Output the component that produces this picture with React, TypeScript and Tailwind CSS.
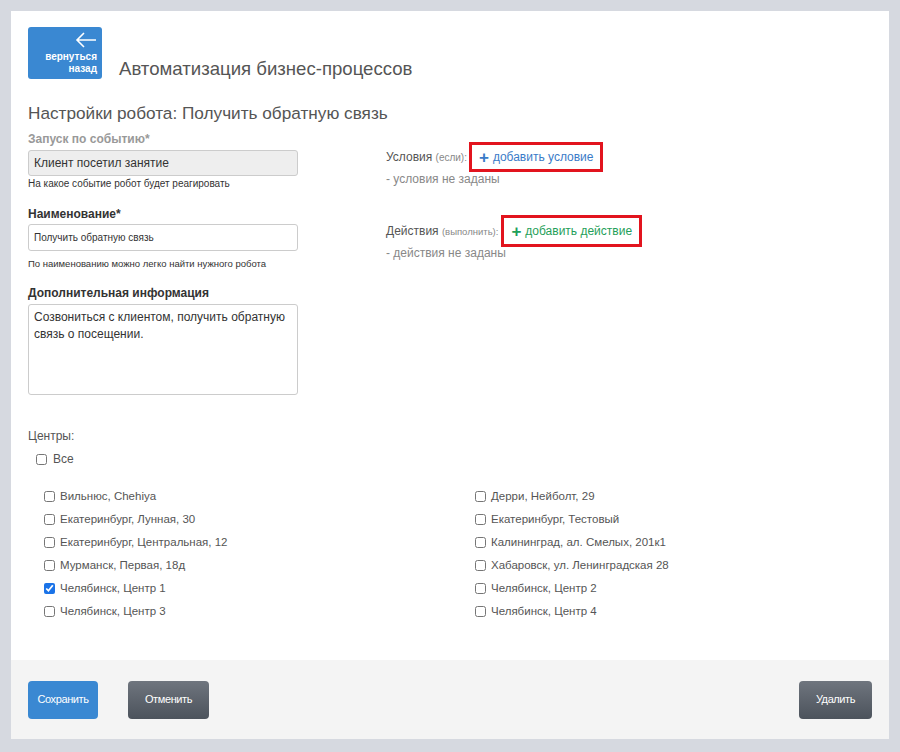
import { useState } from "react";

const leftCenters = [
  "Вильнюс, Chehiya",
  "Екатеринбург, Лунная, 30",
  "Екатеринбург, Центральная, 12",
  "Мурманск, Первая, 18д",
  "Челябинск, Центр 1",
  "Челябинск, Центр 3",
];

const rightCenters = [
  "Дерри, Нейболт, 29",
  "Екатеринбург, Тестовый",
  "Калининград, ал. Смелых, 201к1",
  "Хабаровск, ул. Ленинградская 28",
  "Челябинск, Центр 2",
  "Челябинск, Центр 4",
];

function CenterBox({ label, checked, onToggle }: { label: string; checked: boolean; onToggle: () => void }) {
  return (
    <label className="flex h-[23px] items-center gap-[5px] text-[11.5px] text-[#555]">
      <input type="checkbox" checked={checked} onChange={onToggle} className="m-0 h-[11px] w-[11px] accent-[#1a73e8]" />
      <span>{label}</span>
    </label>
  );
}

export default function App() {
  const [checked, setChecked] = useState<Record<string, boolean>>({ "Челябинск, Центр 1": true });
  const [all, setAll] = useState(false);

  const toggle = (name: string) => setChecked((prev) => ({ ...prev, [name]: !prev[name] }));

  return (
    <div className="min-h-[752px] bg-[#d6d9e0] p-[11px] font-['Liberation_Sans',Arial,sans-serif] text-[#333]">
      <div className="flex min-h-[727px] flex-col bg-white">
        <div className="flex-1 px-[17px] pt-[16px]">
          {/* header */}
          <div className="flex items-end gap-[17px]">
            <button className="flex h-[52px] w-[74px] flex-col items-end rounded-[3px] bg-[#3a88d2] px-[5px] pt-[5px] text-right text-white">
              <svg width="22" height="16" viewBox="0 0 22 16" fill="none" stroke="currentColor" strokeWidth="1.6">
                <path d="M21 8H2M9 1 2 8l7 7" />
              </svg>
              <span className="mt-[3px] text-[10px] font-bold leading-[12px]">вернуться</span>
              <span className="text-[10px] font-bold leading-[12px]">назад</span>
            </button>
            <h1 className="mb-[-2px] text-[18.6px] leading-[24px] text-[#555]">Автоматизация бизнес-процессов</h1>
          </div>

          <h2 className="mt-[23px] text-[17.2px] leading-[22px] text-[#555]">Настройки робота: Получить обратную связь</h2>

          <div className="mt-[7px] flex">
            <div className="w-[270px]">
              <div className="text-[12px] font-bold leading-[16px] text-[#999]">Запуск по событию*</div>
              <div className="mt-[3px] flex h-[26px] items-center rounded-[3px] border border-[#ccc] bg-[#eee] px-[5px] text-[12px] text-[#333]">
                Клиент посетил занятие
              </div>
              <div className="mt-[1px] text-[10px] leading-[13px] text-[#333]">На какое событие робот будет реагировать</div>

              <div className="mt-[16px] text-[12px] font-bold leading-[16px] text-[#333]">Наименование*</div>
              <div className="mt-[2px] flex h-[27px] items-center rounded-[3px] border border-[#ccc] bg-white px-[5px] text-[10px] text-[#333]">
                Получить обратную связь
              </div>
              <div className="mt-[7px] text-[9.5px] leading-[12px] text-[#333]">По наименованию можно легко найти нужного робота</div>

              <div className="mt-[15px] text-[12px] font-bold leading-[16px] text-[#333]">Дополнительная информация</div>
              <div className="mt-[3px] h-[91px] rounded-[3px] border border-[#ccc] bg-white px-[5px] pt-[4px] text-[12px] leading-[17px] text-[#333]">
                Созвониться с клиентом, получить обратную связь о посещении.
              </div>
            </div>

            <div className="ml-[88px] pt-[11px]">
              <div className="flex items-center">
                <span className="text-[12px] text-[#555]">
                  Условия <span className="text-[10px] text-[#888]">(если):</span>
                </span>
                <button className="ml-[2px] flex h-[30px] items-center border-[3px] border-[#e2141e] px-[7px] text-[12px] text-[#3a7bc8]">
                  <span className="mr-[4px] text-[17px] font-bold leading-none">+</span>добавить условие
                </button>
              </div>
              <div className="mt-[-2px] text-[12px] text-[#888]">- условия не заданы</div>

              <div className="mt-[27px] flex items-center">
                <span className="text-[12px] text-[#555]">
                  Действия <span className="text-[9.5px] text-[#888]">(выполнить):</span>
                </span>
                <button className="ml-[3px] flex h-[32px] items-center border-[3px] border-[#e2141e] px-[7px] text-[12px] text-[#1fa05a]">
                  <span className="mr-[4px] text-[17px] font-bold leading-none">+</span>добавить действие
                </button>
              </div>
              <div className="mt-[-3px] text-[12px] text-[#888]">- действия не заданы</div>
            </div>
          </div>

          {/* centers */}
          <div className="mt-[32px] text-[12px] text-[#555]">Центры:</div>
          <label className="ml-[8px] mt-[5px] flex items-center gap-[6px] text-[12px] text-[#555]">
            <input type="checkbox" checked={all} onChange={() => setAll(!all)} className="m-0 h-[11px] w-[11px]" />
            <span>Все</span>
          </label>

          <div className="ml-[16px] mt-[17px] flex">
            <div className="w-[431px]">
              {leftCenters.map((c) => (
                <CenterBox key={c} label={c} checked={!!checked[c]} onToggle={() => toggle(c)} />
              ))}
            </div>
            <div>
              {rightCenters.map((c) => (
                <CenterBox key={c} label={c} checked={!!checked[c]} onToggle={() => toggle(c)} />
              ))}
            </div>
          </div>
        </div>

        {/* footer */}
        <div className="mt-[37px] flex h-[79px] items-center bg-[#f4f4f4] px-[17px]">
          <button className="h-[38px] w-[70px] rounded-[4px] bg-[#3a88d2] text-[11px] tracking-[-0.4px] text-white">Сохранить</button>
          <button className="ml-[30px] h-[38px] w-[81px] rounded-[4px] bg-gradient-to-b from-[#6f757e] to-[#4c535c] text-[11px] tracking-[-0.4px] text-white">
            Отменить
          </button>
          <button className="ml-auto h-[38px] w-[73px] rounded-[4px] bg-gradient-to-b from-[#6f757e] to-[#4c535c] text-[11px] tracking-[-0.4px] text-white">
            Удалить
          </button>
        </div>
      </div>
    </div>
  );
}
